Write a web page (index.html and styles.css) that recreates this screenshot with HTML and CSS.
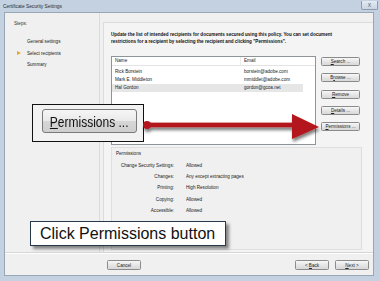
FILE: index.html
```html
<!DOCTYPE html>
<html lang="en">
<head>
  <meta charset="UTF-8">
  <title>Certificate Security Settings</title>
  <link rel="stylesheet" href="styles.css">
</head>
<body>
  <div class="window">
    <!-- title bar -->
    <div class="titlebar">
      <span class="title">Certificate Security Settings</span>
      <span class="close">X</span>
    </div>

    <div class="client">
      <div class="main">
        <!-- wizard steps -->
        <div class="steps">
          <div class="steps-head">Steps:</div>
          <ul class="step-list">
            <li>General settings</li>
            <li class="current">Select recipients</li>
            <li>Summary</li>
          </ul>
        </div>

        <!-- page content -->
        <div class="page">
          <p class="intro">Update the list of intended recipients for documents secured using this policy. You can set document restrictions for a recipient by selecting the recipient and clicking "Permissions".</p>

          <div class="recips">
            <div class="list">
              <div class="list-row list-head">
                <span>Name</span>
                <span>Email</span>
              </div>
              <div class="list-row">
                <span>Rick Borstein</span>
                <span>borstein@adobe.com</span>
              </div>
              <div class="list-row">
                <span>Mark E. Middleton</span>
                <span>mmiddlet@adobe.com</span>
              </div>
              <div class="list-row selected">
                <span>Hal Gordon</span>
                <span>gordon@gcoa.net</span>
              </div>
            </div>

            <div class="side-buttons">
              <button class="btn"><u>S</u>earch ...</button>
              <button class="btn">B<u>r</u>owse ...</button>
              <button class="btn"><u>R</u>emove</button>
              <button class="btn"><u>D</u>etails ...</button>
              <button class="btn"><u>P</u>ermissions ...</button>
            </div>
          </div>

          <div class="perms">
            <div class="perms-head">Permissions</div>
            <div class="perms-grid">
              <span class="key">Change Security Settings:</span><span>Allowed</span>
              <span class="key">Changes:</span><span>Any except extracting pages</span>
              <span class="key">Printing:</span><span>High Resolution</span>
              <span class="key">Copying:</span><span>Allowed</span>
              <span class="key">Accessible:</span><span>Allowed</span>
            </div>
          </div>
        </div>
      </div>

      <!-- wizard footer -->
      <div class="footer">
        <button class="btn wide">Cancel</button>
        <button class="btn wide back">&lt; <u>B</u>ack</button>
        <button class="btn wide"><u>N</u>ext &gt;</button>
      </div>
    </div>
  </div>

  <!-- tutorial overlays -->
  <div class="callout-zoom">
    <div class="big-button"><span class="big-label"><u>P</u>ermissions ...</span></div>
  </div>

  <svg class="arrow" width="185" height="40" viewBox="0 0 185 40">
    <defs>
      <filter id="shadow" x="-10%" y="-30%" width="120%" height="180%">
        <feDropShadow dx="1" dy="3" stdDeviation="1.8" flood-color="#000" flood-opacity="0.5"/>
      </filter>
    </defs>
    <g filter="url(#shadow)" fill="#b3151b">
      <circle cx="7" cy="17" r="4"/>
      <rect x="7" y="14.6" width="148" height="4.6"/>
      <polygon points="152,6 179,19 152,31"/>
    </g>
  </svg>

  <div class="callout-text">Click Permissions button</div>
</body>
</html>
```

FILE: styles.css
```css
body {
  margin: 0;
  width: 380px;
  height: 281px;
  overflow: hidden;
  position: relative;
  font-family: "Liberation Sans", Arial, sans-serif;
  color: #1a1a1a;
}

.window {
  height: 281px;
  box-sizing: border-box;
  background-color: #c3d1e0;
  padding: 0 6px 5px 4px;
  display: flex;
  flex-direction: column;
}

.titlebar {
  height: 12px;
  display: flex;
  align-items: center;
}

.title {
  font-size: 4.8px;
  color: #222c3a;
  margin-left: -1px;
}

.close {
  margin-left: auto;
  margin-right: -4px;
  width: 15px;
  height: 8px;
  margin-top: -2px;
  border: 1px solid #8c9bb0;
  border-top: none;
  border-radius: 0 0 2px 2px;
  background: linear-gradient(#e3eaf2, #c9d5e2);
  font-size: 5px;
  color: #4b5667;
  text-align: center;
  line-height: 8px;
}

.client {
  flex: 1;
  background-color: #f0f0f0;
  border: 1px solid #98a6b6;
  display: flex;
  flex-direction: column;
  font-size: 4.6px;
}

.main {
  flex: 1;
  display: flex;
}

/* ========== steps column ========== */
.steps {
  width: 95px;
  border-right: 1px solid #dcdcdc;
  margin-right: 3px;
  padding: 8px 0 0 9px;
  box-sizing: border-box;
}

.steps-head {
  color: #333;
  line-height: 6px;
}

.step-list {
  list-style: none;
  margin: 9px 0 0;
  padding: 0 0 0 13px;
}

.step-list li {
  line-height: 11.5px;
  position: relative;
}

.step-list li.current::before {
  content: "";
  position: absolute;
  left: -10px;
  top: 3.5px;
  width: 0;
  height: 0;
  border-top: 2.5px solid transparent;
  border-bottom: 2.5px solid transparent;
  border-left: 4px solid #e9a526;
}

/* ========== page ========== */
.page {
  flex: 1;
  margin-top: 9px;
  border-top: 1px solid #dcdcdc;
  border-left: 1px solid #dcdcdc;
  background-color: #f4f4f4;
  padding: 8px 11px 2px 7px;
  display: flex;
  flex-direction: column;
}

.intro {
  margin: 0;
  font-weight: bold;
  line-height: 7px;
  width: 240px;
  color: #111;
}

.recips {
  margin-top: 11px;
  display: flex;
}

.list {
  width: 205px;
  height: 89px;
  box-sizing: border-box;
  background-color: #fff;
  border: 1px solid #8f9499;
}

.list-row {
  display: grid;
  grid-template-columns: 129px 1fr;
  height: 8px;
  line-height: 8px;
  margin-right: 12px;
}

.list-row span {
  padding-left: 3px;
}

.list-head {
  margin: 0 0 2px;
  border-bottom: 1px solid #e3e3e3;
}

.list-head span:first-child {
  border-right: 1px solid #ececec;
}

.selected {
  background-color: #e6e6e6;
}

.side-buttons {
  margin-left: 5px;
  padding-top: 1px;
  width: 39px;
  display: flex;
  flex-direction: column;
  gap: 7.3px;
}

.btn {
  height: 9px;
  padding: 0;
  border: 1px solid #8b8b8b;
  border-radius: 1.5px;
  background: linear-gradient(#f7f7f7, #e6e6e6 50%, #d8d8d8);
  font-family: inherit;
  font-size: 4.6px;
  color: #222;
  line-height: 7px;
}

.perms {
  margin-top: 2px;
  height: 103px;
  box-sizing: border-box;
  border: 1px solid #dedede;
  background-color: #f0f0f0;
  padding: 3px 0 0 4px;
}

.perms-head {
  line-height: 6px;
}

.perms-grid {
  margin-top: 3px;
  display: grid;
  grid-template-columns: 58px 1fr;
  column-gap: 12px;
  line-height: 11.2px;
}

.key {
  text-align: right;
}

/* ========== footer ========== */
.footer {
  height: 23px;
  box-sizing: border-box;
  border-top: 1px solid #d6d6d6;
  box-shadow: inset 0 1px 0 #fff;
  padding: 7px 4px 0 102px;
  display: flex;
  align-items: flex-start;
  gap: 6px;
}

.btn.wide {
  width: 34px;
  height: 10px;
}

.back {
  margin-left: auto;
}

/* ========== tutorial overlays ========== */
.callout-zoom {
  position: absolute;
  left: 32px;
  top: 104px;
  width: 112px;
  height: 38px;
  box-sizing: border-box;
  border: 1px solid #111;
  background-color: #f2f2f2;
  padding: 4px 0 0 9px;
}

.big-button {
  width: 95px;
  height: 24px;
  box-sizing: border-box;
  border: 1px solid #7a7a7a;
  border-radius: 3px;
  background: linear-gradient(#f6f6f6, #e9e9e9 50%, #d6d6d6 51%, #cfcfcf);
  display: flex;
  justify-content: center;
  align-items: center;
  color: #111;
}

.big-label {
  display: inline-block;
  flex-shrink: 0;
  white-space: nowrap;
  font-size: 15px;
  line-height: 16px;
  transform: scaleX(0.8);
  margin-top: 1px;
}

.arrow {
  position: absolute;
  left: 140px;
  top: 108px;
}

.callout-text {
  position: absolute;
  left: 30px;
  top: 221px;
  width: 196px;
  height: 25px;
  box-sizing: border-box;
  border: 1px solid #27384a;
  background-color: #fff;
  box-shadow: 3px 3px 3px rgba(0, 0, 0, 0.45);
  padding-left: 9px;
  font-size: 16px;
  line-height: 23px;
  color: #111;
}
```
